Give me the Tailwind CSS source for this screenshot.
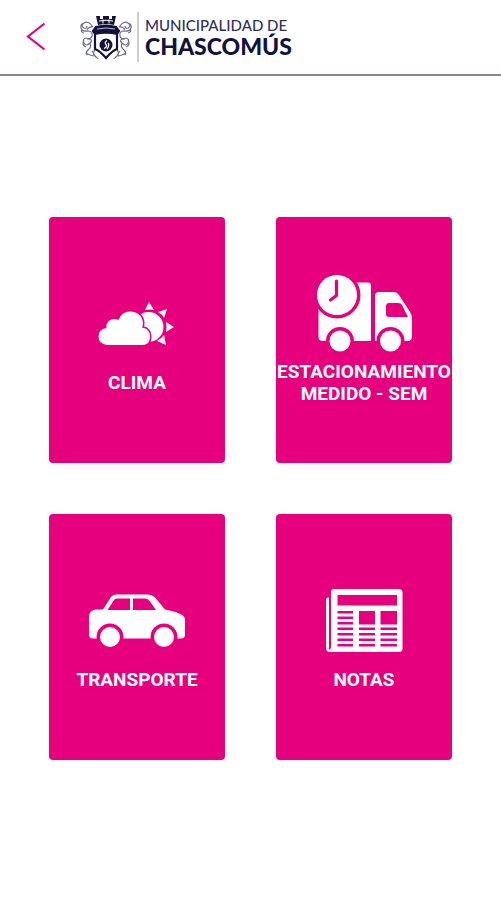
<!DOCTYPE html>
<html lang="es">
<head>
<meta charset="utf-8">
<meta name="viewport" content="width=device-width, initial-scale=1">
<title>Municipalidad de Chascomús</title>
<script src="https://cdn.jsdelivr.net/npm/@tailwindcss/browser@4"></script>
</head>
<body class="flex min-h-screen flex-col bg-white font-[Roboto,sans-serif]">
<header class="flex h-[76px] items-center border-b-2 border-[#8b8587] pl-[23px]">
  <button type="button" aria-label="Volver" class="mr-8 flex h-10 w-6 items-center justify-center">
    <svg class="h-8 w-6" viewBox="0 0 24 32" fill="none" stroke="#e6007e" stroke-width="2.2"><path d="M21.500 2.500 5 15.500 21.500 28.500"/></svg>
  </button>
  <div class="flex items-center text-[#12123f]">
    <svg class="h-[48px] w-[54px]" viewBox="0 0 54 48" fill="none" stroke="currentColor" aria-hidden="true">
      <path fill="currentColor" stroke="none" d="M17 3h4v3h3V3h6v3h3V3h4l-2 9q-8-2-16 0z"/>
      <path stroke="#fff" stroke-width="1" d="M20 8q7-1.500 14 0M24 6.500v4M30 6.500v4"/>
      <path fill="#fff" stroke-width="2.200" d="M17 14q10-3 20 0l3 4-2 3v15q-5 2-11 9-6-7-11-9V21l-2-3z"/>
      <path fill="currentColor" stroke="none" d="M17 14q10-3 20 0l3 4-2 4q-11-2.500-22 0l-2-4z"/>
      <path stroke="#fff" stroke-width=".7" d="M18 16q9-2 18 0"/>
      <circle cx="27" cy="32" r="6.500" fill="currentColor" stroke="none"/>
      <path stroke="#fff" stroke-width="1.300" d="M28 27.500q-3 2-1 4t-2 4M29 30q2 2-1 6"/>
      <g id="scroll" stroke-width="1.200" opacity=".6" transform="translate(0 1)">
        <path d="M14 13Q9 6 5 9t0 5q3 1 3-2M14 13q-4-1-6 3M5 9q-4 1-3 5t8 3q4 1 3 5t-6 2M3 15q-2 3 2 4M7 24q-4 1-2 5t6 0-3-4M5 26q-3 5 2 7M11 29q2 4-2 7t2 5 4-1-2-3M9 36q-3 3-1 5M16 36q-3 3 0 6t3 2"/>
      </g>
      <use href="#scroll" transform="matrix(-1 0 0 1 54 0)"/>
    </svg>
    <div class="ml-1 h-[50px] w-[2px] bg-[#cecece]"></div>
    <div class="ml-[6px] flex flex-col font-[Lato,sans-serif] whitespace-nowrap">
      <span class="text-[15px] leading-[18px] font-medium text-[#30305c]">MUNICIPALIDAD DE</span>
      <span class="text-[23px] leading-[24px] font-black">CHASCOMÚS</span>
    </div>
  </div>
</header>
<main class="flex flex-1 flex-col justify-center px-[49px]">
  <nav class="grid grid-cols-2 gap-[51px] text-center text-[19px] leading-[22px] font-bold text-white">
    <a href="#clima" class="flex h-[246px] flex-col items-center justify-center rounded-[4px] bg-[#e6007e]">
      <svg class="h-[86px] w-[100px]" viewBox="0 0 100 86" fill="#fff" aria-hidden="true">
        <circle cx="61.500" cy="41" r="15"/>
        <path d="m62 16 5 8q-4-1-9 0zM80 23l-3 9q-2-4-6-6zM87 41l-8 5q1-5 0-10zM79 59l-9-4q5-3 7-6z"/>
        <path stroke="#e6007e" stroke-width="3" paint-order="stroke" d="M20 59Q11.500 58 11.500 50.500t8-8.500c-1-5 3-9 8-9q2 0 4 1 3-8.500 11.500-8.500c8 0 13 5 13 12q0 2-1 4 8 1 8 9 0 8-7 8.500z"/>
      </svg>
      <span>CLIMA</span>
    </a>
    <a href="#sem" class="flex h-[246px] flex-col items-center justify-center rounded-[4px] bg-[#e6007e]">
      <svg class="h-[86px] w-[100px]" viewBox="0 0 100 86" fill="#fff" aria-hidden="true">
        <path d="M35 7.500h19q3 0 3 3V66H9q-4.500 0-4.500-4V24zM65 17h15q3 0 5 3l11 17q2 3 2 6v18q0 5-4 5H61V21q0-4 4-4z"/>
        <path fill="#e6007e" d="M75 28h9q3 0 4 2l6 12H75q-3 0-3-3v-8q0-3 3-3z"/>
        <g stroke="#e6007e" stroke-width="7" paint-order="stroke">
          <circle cx="23" cy="20" r="20"/><circle cx="26" cy="66" r="10.500"/><circle cx="76.500" cy="66" r="10.500"/>
        </g>
        <path fill="none" stroke="#e6007e" stroke-width="3.200" stroke-linecap="round" stroke-linejoin="round" d="M22.500 6v14.500L16.500 25"/>
      </svg>
      <span>ESTACIONAMIENTO<br>MEDIDO - SEM</span>
    </a>
    <a href="#transporte" class="flex h-[246px] flex-col items-center justify-center rounded-[4px] bg-[#e6007e]">
      <svg class="h-[86px] w-[100px]" viewBox="0 0 100 86" fill="#fff" aria-hidden="true">
        <path d="M9 26.500h7L24 14q2-2.500 5-2.500h32q4 0 7 3l10 12q12 2 18 6 2 2 2 5v14q0 4-4 4H6q-4 0-4-4V34q0-7 7-7.500z"/>
        <path fill="#e6007e" d="M30 15.500h13v11.500H20.500l6.500-10q1-1.500 3-1.500zM46 15.500h12q3 0 5 3l6 8.500H46z"/>
        <g stroke="#e6007e" stroke-width="7" paint-order="stroke"><circle cx="23" cy="54" r="10"/><circle cx="77" cy="54" r="10"/></g>
      </svg>
      <span>TRANSPORTE</span>
    </a>
    <a href="#notas" class="flex h-[246px] flex-col items-center justify-center rounded-[4px] bg-[#e6007e]">
      <svg class="h-[86px] w-[100px]" viewBox="0 0 100 86" fill="#fff" aria-hidden="true">
        <path d="M20 6h65q3.500 0 3.500 3.500v56q0 3.500-3.500 3.500H16q-4 0-4-4V17q0-2.500 2.500-2.500H17V9q0-3 3-3z"/>
        <path fill="#e6007e" d="M23.500 12H83v10.500H23.500zM45 28h16v13.500H45zM66.500 28H83v13.500H66.500z"/>
        <path fill="none" stroke="#e6007e" stroke-width="2" d="M16 14v50q0 1.500-1 2"/>
        <path fill="none" stroke="#e6007e" stroke-width="2.500" d="M23.500 29.300H39M23.500 34.800H39M23.500 40.300H39M23.500 45.800H39M23.500 51.300H39M23.500 56.800H39M23.500 62.300H39M45 45.800H61M45 51.300H61M45 56.800H61M45 62.300H61M66.500 45.800H83M66.500 51.300H83M66.500 56.800H83M66.500 62.300H83"/>
      </svg>
      <span>NOTAS</span>
    </a>
  </nav>
</main>
</body>
</html>
